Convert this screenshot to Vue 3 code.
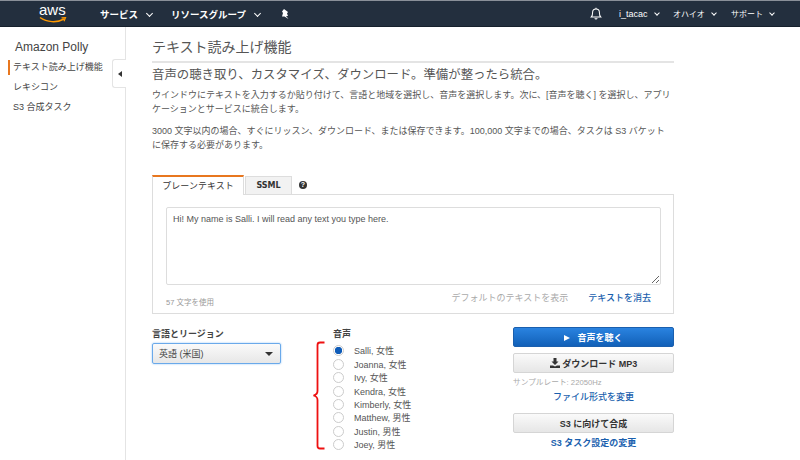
<script setup>
import { ref } from 'vue'

const voices = ref([
  'Salli, 女性',
  'Joanna, 女性',
  'Ivy, 女性',
  'Kendra, 女性',
  'Kimberly, 女性',
  'Matthew, 男性',
  'Justin, 男性',
  'Joey, 男性',
])
const selected = ref('Salli, 女性')
const text = ref('Hi! My name is Salli. I will read any text you type here.')
</script>

<template>
  <div class="page">
    <header class="topbar">
      <div class="logo">
        <span class="logo-text">aws</span>
        <svg class="smile" width="28" height="8" viewBox="0 0 28 8">
          <path d="M1 1.5C8 6.5 18 7 25 3" fill="none" stroke="#f90" stroke-width="1.5" />
          <path d="M22.5 1.8L26.5 1.6L25 5.2" fill="none" stroke="#f90" stroke-width="1.2" />
        </svg>
      </div>
      <span class="nav nav-services">サービス <i class="chev"></i></span>
      <span class="nav nav-groups">リソースグループ <i class="chev"></i></span>
      <svg class="pin" width="8" height="10" viewBox="0 0 8 10">
        <path d="M3 0L7 3L6 4.5L7 7L5 7L7.5 10L3.5 7.5L1 7.5L2 4L1 2.5Z" fill="#fff" />
      </svg>
      <div class="spacer"></div>
      <svg class="bell" width="12" height="13" viewBox="0 0 14 15">
        <path d="M1.5 11.5C3 10 3 8.5 3 6.5C3 4 4.6 2.2 7 2.2S11 4 11 6.5C11 8.5 11 10 12.5 11.5Z" fill="none" stroke="#fff" stroke-width="1.2" />
        <path d="M5.6 13a1.5 1.5 0 0 0 2.8 0M7 .8V2.2" fill="none" stroke="#fff" stroke-width="1.2" />
      </svg>
      <span class="nav-small user">i_tacac <i class="chev small"></i></span>
      <span class="nav-small region">オハイオ <i class="chev small"></i></span>
      <span class="nav-small support">サポート <i class="chev small"></i></span>
    </header>

    <div class="body">
      <aside class="sidebar">
        <div class="side-title">Amazon Polly</div>
        <ul class="side-menu">
          <li class="active">テキスト読み上げ機能</li>
          <li>レキシコン</li>
          <li>S3 合成タスク</li>
        </ul>
        <div class="collapse"><i></i></div>
      </aside>

      <main class="content">
        <h1>テキスト読み上げ機能</h1>
        <h2>音声の聴き取り、カスタマイズ、ダウンロード。準備が整ったら統合。</h2>
        <p class="first">ウインドウにテキストを入力するか貼り付けて、言語と地域を選択し、音声を選択します。次に、[音声を聴く] を選択し、アプリケーションとサービスに統合します。</p>
        <p class="second">3000 文字以内の場合、すぐにリッスン、ダウンロード、または保存できます。100,000 文字までの場合、タスクは S3 バケットに保存する必要があります。</p>

        <div class="tabs">
          <div class="tab on">プレーンテキスト</div>
          <div class="tab off">SSML</div>
          <span class="help">?</span>
        </div>
        <div class="panel">
          <textarea v-model="text" class="input" spellcheck="false"></textarea>
          <div class="panel-foot">
            <span class="count">57 文字を使用</span>
            <span class="muted-link">デフォルトのテキストを表示</span>
            <a class="link clear">テキストを消去</a>
          </div>
        </div>

        <div class="form">
          <div class="col-lang">
            <label>言語とリージョン</label>
            <div class="select">英語 (米国)<i></i></div>
          </div>
          <div class="col-voice">
            <label>音声</label>
            <svg class="brace" width="14" height="109" viewBox="0 0 14 109">
              <path d="M13.5 1.5H9Q6.5 1.5 6.5 4V50Q6.5 53.5 2.5 54.5Q6.5 55.5 6.5 59V105Q6.5 107.5 9 107.5H13.5" fill="none" stroke="#ee1111" stroke-width="1.8" />
            </svg>
            <div class="voices">
              <div v-for="v in voices" :key="v" class="voice">
                <span class="radio" :class="{ checked: v === selected }"></span>{{ v }}
              </div>
            </div>
          </div>
          <div class="col-actions">
            <button class="btn primary"><i class="play"></i>音声を聴く</button>
            <button class="btn dl">
              <svg width="10" height="10" viewBox="0 0 10 10">
                <path d="M3.5 0H6.5V3.5H8.5L5 7L1.5 3.5H3.5ZM0 7.5H3L5 8.6L7 7.5H10V10H0Z" fill="#333" />
              </svg>
              ダウンロード MP3
            </button>
            <div class="rate">サンプルレート: 22050Hz</div>
            <a class="link center format">ファイル形式を変更</a>
            <button class="btn s3">S3 に向けて合成</button>
            <a class="link center task">S3 タスク設定の変更</a>
          </div>
        </div>
      </main>
    </div>
  </div>
</template>

<style>
html,
body {
  margin: 0;
  background: #fff;
}
</style>

<style scoped>
.page {
  width: 800px;
  height: 460px;
  overflow: hidden;
  font-family: "Liberation Sans", "Noto Sans CJK JP", sans-serif;
  color: #444;
}

.topbar {
  height: 25px;
  background: #232f3e;
  border-top: 1px solid #8a9099;
  border-bottom: 1px solid #16202c;
  display: flex;
  align-items: center;
  color: #fff;
}

.logo {
  width: 26px;
  margin-left: 39px;
  position: relative;
  height: 24px;
}

.logo-text {
  position: absolute;
  top: 0;
  left: 0;
  font-size: 15px;
  line-height: 16px;
}

.smile {
  position: absolute;
  left: 0;
  top: 14px;
}

.nav {
  font-size: 9.5px;
  font-weight: bold;
  white-space: nowrap;
}

.nav-services {
  margin-left: 35px;
  width: 71px;
}

.nav-groups {
  width: 110px;
}

.spacer {
  flex: 1;
}

.chev {
  display: inline-block;
  width: 4px;
  height: 4px;
  border-right: 1px solid #fff;
  border-bottom: 1px solid #fff;
  transform: rotate(45deg);
  margin: 0 0 2px 6px;
}

.chev.small {
  width: 3px;
  height: 3px;
  margin-bottom: 2px;
  margin-left: 5px;
}

.bell {
  margin-right: 17px;
}

.nav-small {
  font-size: 8px;
  white-space: nowrap;
}

.user {
  width: 54px;
  font-size: 9px;
}

.region {
  width: 58px;
}

.support {
  width: 43px;
  margin-right: 26px;
}

.body {
  display: flex;
  height: 433px;
}

.sidebar {
  width: 125px;
  flex: none;
  border-right: 1px solid #e4e4e4;
  position: relative;
  padding-top: 13px;
}

.side-title {
  font-size: 12px;
  line-height: 14px;
  margin-left: 15px;
  color: #444;
}

.side-menu {
  list-style: none;
  margin: 5px 0 0 8px;
  padding: 0;
  font-size: 9px;
}

.side-menu li {
  height: 20px;
  line-height: 17px;
  padding-left: 5px;
  white-space: nowrap;
}

.side-menu li.active {
  position: relative;
}

.side-menu li.active::before {
  content: "";
  position: absolute;
  left: 0;
  top: 1px;
  width: 2px;
  height: 15px;
  background: #e8771f;
}

.collapse {
  position: absolute;
  left: 112px;
  top: 32px;
  width: 13px;
  height: 27px;
  background: #fff;
  border: 1px solid #e4e4e4;
  border-right: none;
  border-radius: 3px 0 0 3px;
  display: flex;
  align-items: center;
  justify-content: center;
}

.collapse i {
  border: 3px solid transparent;
  border-left: none;
  border-right: 4px solid #333;
}

.content {
  width: 522px;
  margin-left: 26px;
  flex: none;
}

h1 {
  margin: 0;
  padding: 12px 0 5px;
  font-size: 14px;
  line-height: 17px;
  font-weight: normal;
  color: #555;
  border-bottom: 2px solid #e4e4e4;
}

h2 {
  margin: 4px 0 0;
  font-size: 12.4px;
  line-height: 16px;
  font-weight: normal;
  color: #555;
}

p {
  margin: 0;
  font-size: 9px;
  line-height: 14px;
  color: #555;
}

.first {
  margin-top: 5px;
}

.second {
  margin-top: 9px;
  line-height: 13.5px;
  max-width: 518px;
}

.tabs {
  margin-top: 23px;
  height: 19px;
  display: flex;
  align-items: flex-end;
  font-size: 9px;
}

.tab {
  text-align: center;
}

.tab.on {
  width: 90px;
  height: 18px;
  line-height: 18px;
  border: 1px solid #ddd;
  border-top: 2px solid #e8771f;
  border-bottom: none;
  background: #fff;
  position: relative;
  top: 1px;
  z-index: 1;
  color: #333;
}

.tab.off {
  width: 45px;
  margin-left: 1px;
  height: 17px;
  line-height: 17px;
  border: 1px solid #ddd;
  border-bottom: none;
  background: #f2f2f2;
  font-family: "DejaVu Sans", sans-serif;
  font-size: 8px;
  font-weight: bold;
  color: #333;
}

.help {
  width: 8px;
  height: 8px;
  line-height: 8px;
  border-radius: 50%;
  background: #333;
  color: #fff;
  font-size: 7px;
  font-weight: bold;
  text-align: center;
  margin: 0 0 5px 7px;
}

.panel {
  border: 1px solid #ddd;
  height: 106px;
  padding: 12px 12px 0 13px;
  width: 495px;
}

.input {
  display: block;
  width: 495px;
  height: 78px;
  box-sizing: border-box;
  border: 1px solid #ddd;
  border-radius: 2px;
  padding: 5px 6px;
  font-family: inherit;
  font-size: 9px;
  line-height: 12px;
  color: #555;
  outline: none;
}

.panel-foot {
  display: flex;
  align-items: flex-start;
  margin-top: 7px;
  height: 13px;
}

.count {
  font-size: 7.5px;
  line-height: 13px;
  padding-top: 4px;
  color: #999;
  flex: 1;
}

.muted-link {
  font-size: 9px;
  line-height: 13px;
  color: #aaa;
}

.link {
  color: #1a5fae;
  font-size: 9px;
  font-weight: 500;
}

.clear {
  line-height: 13px;
  margin-left: 20px;
  margin-right: 10px;
}

.form {
  display: flex;
  margin-top: 13px;
}

label {
  display: block;
  padding-top: 1px;
  font-size: 9px;
  line-height: 12px;
  font-weight: bold;
  color: #444;
}

.col-lang {
  width: 181px;
}

.select {
  margin-top: 3px;
  width: 129px;
  height: 21px;
  line-height: 20px;
  box-sizing: border-box;
  border: 1px solid #6aa9ea;
  border-radius: 2px;
  box-shadow: 0 0 2px #8cc0f5;
  background: linear-gradient(#fafafa, #e7e7e7);
  padding-left: 6px;
  font-size: 9px;
  position: relative;
  color: #444;
}

.select i {
  position: absolute;
  right: 7px;
  top: 8px;
  border: 4px solid transparent;
  border-top: 4px solid #333;
  border-bottom: none;
}

.col-voice {
  width: 180px;
  position: relative;
}

.brace {
  position: absolute;
  left: -22px;
  top: 14px;
}

.voices {
  margin-top: 4px;
}

.voice {
  height: 13.45px;
  display: flex;
  align-items: center;
  font-size: 9px;
  color: #555;
  white-space: nowrap;
}

.radio {
  width: 9px;
  height: 9px;
  border: 1px solid #ccc;
  border-radius: 50%;
  margin-right: 10px;
  background: #fff;
  flex: none;
}

.radio.checked {
  background: radial-gradient(circle, #0f5cb8 3.4px, #fff 4px);
}

.col-actions {
  width: 161px;
  display: flex;
  flex-direction: column;
}

.btn {
  display: block;
  height: 20px;
  width: 161px;
  padding: 0;
  border-radius: 2px;
  font-family: inherit;
  font-size: 9px;
  font-weight: bold;
  text-align: center;
  box-sizing: border-box;
}

.primary {
  background: linear-gradient(#2a83e0, #1160b8);
  border: 1px solid #1a5fae;
  color: #fff;
}

.play {
  display: inline-block;
  border: 3.5px solid transparent;
  border-left: 6px solid #fff;
  border-right: none;
  margin-right: 7px;
}

.dl,
.s3 {
  background: linear-gradient(#fafafa, #e6e6e6);
  border: 1px solid #d5d5d5;
  color: #333;
}

.dl {
  margin-top: 6px;
}

.dl svg {
  vertical-align: -1px;
}

.rate {
  font-size: 7.7px;
  color: #aaa;
  margin-top: 4px;
  line-height: 11px;
}

.center {
  text-align: center;
}

.format {
  margin-top: 3px;
  line-height: 13px;
}

.s3 {
  margin-top: 9px;
}

.task {
  margin-top: 3px;
  line-height: 14px;
  font-weight: bold;
}
</style>
